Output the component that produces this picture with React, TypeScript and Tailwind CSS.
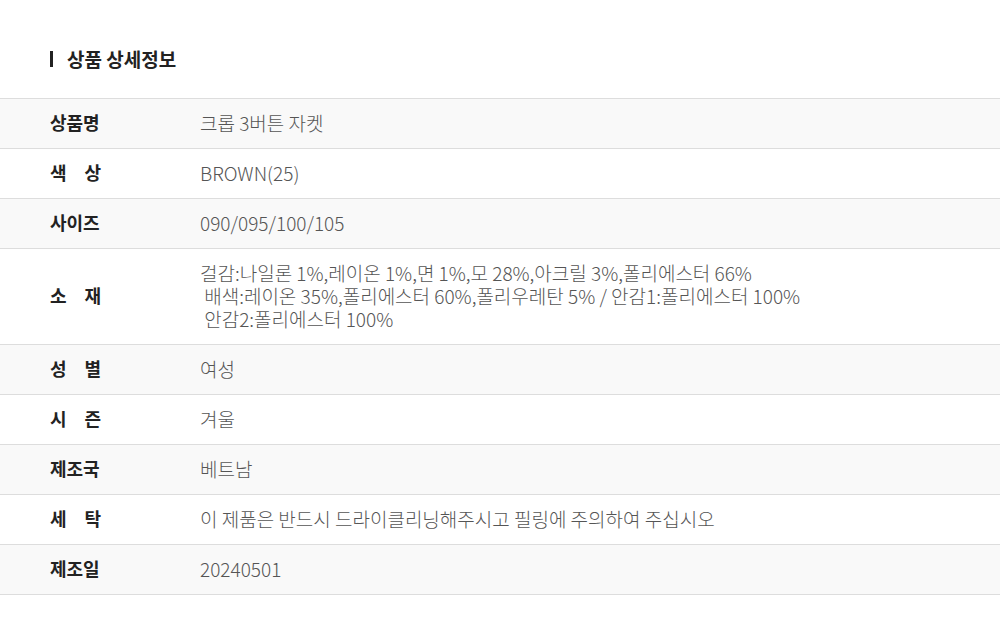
import React from "react";

const rows: { label: string[]; value: string[] }[] = [
  { label: ["상품명"], value: ["크롭 3버튼 자켓"] },
  { label: ["색", "상"], value: ["BROWN(25)"] },
  { label: ["사이즈"], value: ["090/095/100/105"] },
  {
    label: ["소", "재"],
    value: [
      "걸감:나일론 1%,레이온 1%,면 1%,모 28%,아크릴 3%,폴리에스터 66%",
      " 배색:레이온 35%,폴리에스터 60%,폴리우레탄 5% / 안감1:폴리에스터 100%",
      " 안감2:폴리에스터 100%",
    ],
  },
  { label: ["성", "별"], value: ["여성"] },
  { label: ["시", "즌"], value: ["겨울"] },
  { label: ["제조국"], value: ["베트남"] },
  { label: ["세", "탁"], value: ["이 제품은 반드시 드라이클리닝해주시고 필링에 주의하여 주십시오"] },
  { label: ["제조일"], value: ["20240501"] },
];

export default function App() {
  return (
    <div
      className="w-[1000px] h-[644px] bg-white"
      style={{ fontFamily: '"Noto Sans CJK KR", "Noto Sans", sans-serif' }}
    >
      <div className="pt-[48px] pl-[50px] h-[98px] flex items-start">
        <div className="flex items-center h-[22px] gap-[14px]">
          <div className="w-[3px] h-[16px] bg-[#222]" />
          <span className="text-[19px] font-bold text-[#222] leading-[22px]">
            상품 상세정보
          </span>
        </div>
      </div>
      <div className="border-t border-[#dddddd]">
        {rows.map((r, i) => (
          <div
            key={i}
            className={`flex border-b border-[#dddddd] ${i % 2 === 0 ? "bg-[#f9f9f9]" : "bg-white"} ${
              r.value.length > 1 ? "h-[96px]" : "h-[50px]"
            }`}
          >
            <div className="w-[200px] pl-[50px] flex items-center pb-[3px]">
              <div
                className={`flex text-[18px] font-bold text-[#222] leading-none ${
                  r.label.length > 1 ? "w-[51px] justify-between" : ""
                }`}
              >
                {r.label.map((l, j) => (
                  <span key={j}>{l}</span>
                ))}
              </div>
            </div>
            <div className="flex flex-col justify-center text-[19px] font-light text-[#555] pb-[3px]">
              {r.value.map((v, j) => (
                <span key={j} className="whitespace-pre leading-[23px]">
                  {v}
                </span>
              ))}
            </div>
          </div>
        ))}
      </div>
    </div>
  );
}
